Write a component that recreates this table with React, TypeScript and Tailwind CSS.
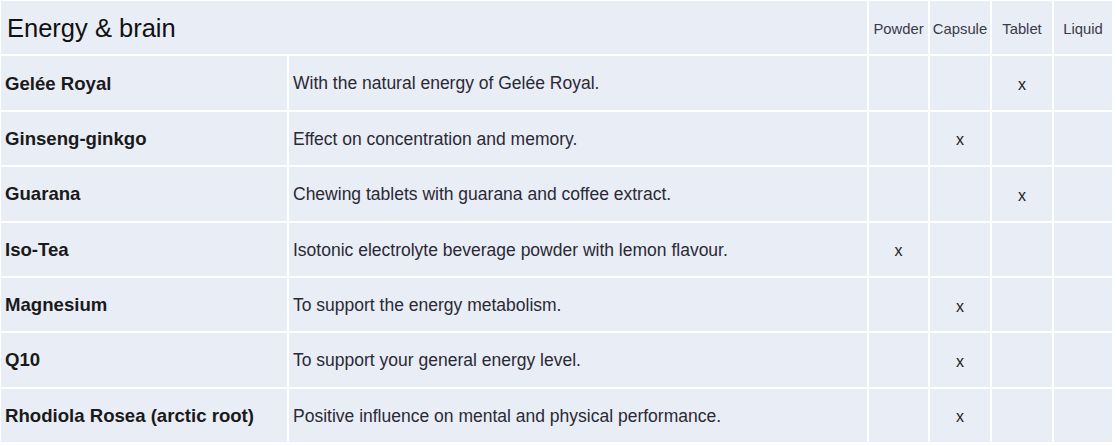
const forms = ['Powder', 'Capsule', 'Tablet', 'Liquid'];

const products = [
  { name: 'Gelée Royal', desc: 'With the natural energy of Gelée Royal.', form: 'Tablet' },
  { name: 'Ginseng-ginkgo', desc: 'Effect on concentration and memory.', form: 'Capsule' },
  { name: 'Guarana', desc: 'Chewing tablets with guarana and coffee extract.', form: 'Tablet' },
  { name: 'Iso-Tea', desc: 'Isotonic electrolyte beverage powder with lemon flavour.', form: 'Powder' },
  { name: 'Magnesium', desc: 'To support the energy metabolism.', form: 'Capsule' },
  { name: 'Q10', desc: 'To support your general energy level.', form: 'Capsule' },
  { name: 'Rhodiola Rosea (arctic root)', desc: 'Positive influence on mental and physical performance.', form: 'Capsule' },
];

export default function App() {
  return (
    <div
      className="w-[1116px] h-[446px] bg-white pl-[1px] pt-[1px]"
      style={{ fontFamily: '"Liberation Sans", Arial, sans-serif' }}
    >
      <div className="grid grid-cols-[286px_578px_59px_60px_60px_58px] grid-rows-[repeat(8,53.375px)] gap-[2px]">
        {/* header */}
        <div className="col-span-2 bg-[#e9edf6] flex items-center pl-[6px] pt-[1px] text-[25.5px] text-[#111]">
          Energy &amp; brain
        </div>
        {forms.map((f) => (
          <div key={f} className="bg-[#e9edf6] flex items-center justify-center pt-[2px] text-[14.8px] text-[#3a3a48]">
            {f}
          </div>
        ))}

        {/* rows */}
        {products.map((p) => (
          <div key={p.name} className="contents">
            <div className="bg-[#e9edf6] flex items-center pl-[4px] pt-[1px] text-[18.6px] font-bold text-[#1a1a1a]">
              {p.name}
            </div>
            <div className="bg-[#e9edf6] flex items-center pl-[4px] pt-[1px] text-[17.5px] text-[#2a2a35]">
              {p.desc}
            </div>
            {forms.map((f) => (
              <div key={f} className="bg-[#e9edf6] flex items-center justify-center pt-[4px] text-[16px] text-[#222]">
                {p.form === f ? 'x' : ''}
              </div>
            ))}
          </div>
        ))}
      </div>
    </div>
  );
}
